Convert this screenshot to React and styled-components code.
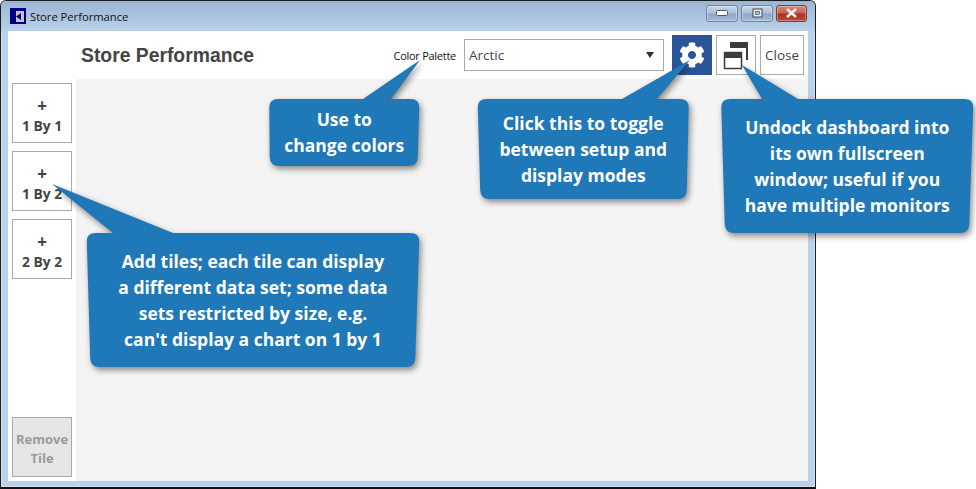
import { createGlobalStyle, styled } from "styled-components";
import { FaCog } from "react-icons/fa";

const Global = createGlobalStyle`
  html, body { margin:0; padding:0; background:#fff; }
  body { font-family:"Open Sans","Liberation Sans",sans-serif; overflow:hidden; }
`;

const Page = styled.div`position:relative; width:976px; height:489px; overflow:hidden;`;

const Win = styled.div`
  box-sizing:border-box; width:816px; height:489px; display:flex; flex-direction:column;
  border:1px solid #1c1c1c; border-bottom:2px solid #111; border-radius:6px 6px 0 0;
  background:#b9d1ea; box-shadow:inset 0 0 0 1px #d5e3f1;
`;
const TitleBar = styled.div`
  height:30px; flex:none; display:flex; align-items:center; padding:0 8px 0 9px;
  background:linear-gradient(#9cb5d1,#b9d1ea); border-radius:5px 5px 0 0;
`;
const AppIcon = styled.svg`width:16px; height:16px; flex:none; margin-right:4px;`;
const WinTitle = styled.span`font-size:11.2px; color:#111; flex:1;`;
const WinBtns = styled.div`display:flex; gap:3px; margin-top:-6px;`;
const WinBtn = styled.div`
  width:${p => p.$close ? 31 : 32}px; height:17px; box-sizing:border-box; display:flex; align-items:center; justify-content:center;
  border:1px solid ${p => p.$close ? "#7c3a32" : "#6f839c"}; border-radius:3px;
  background:${p => p.$close ? "linear-gradient(#d8897c 0%,#c4604f 48%,#a8301f 52%,#b9493a 100%)" : "linear-gradient(#c6d6e8 0%,#a9bed8 48%,#8ba6c6 52%,#a5bcd6 100%)"};
  box-shadow:inset 0 0 0 1px rgba(255,255,255,.35);
`;
const Inner = styled.div`
  flex:1; display:flex; flex-direction:column; margin:0 7px 6px 7px; background:#fff; min-height:0;
`;
const TopBar = styled.div`height:48px; flex:none; display:flex; align-items:center; padding:0 4px 0 73px;`;
const Heading = styled.h1`margin:1px 0 0; flex:1; font:bold 19.33px "Liberation Sans",sans-serif; color:#444;`;
const PaletteLabel = styled.span`font-size:11px; letter-spacing:-.27px; color:#111; margin-right:8px;`;
const Select = styled.div`
  box-sizing:border-box; width:200px; height:32px; display:flex; align-items:center; justify-content:space-between;
  padding:0 9px 0 4px; border:1px solid #aaa; font-size:13.5px; color:#444; margin-right:8px;
`;
const Arrow = styled.i`width:0; height:0; border:4px solid transparent; border-top:6px solid #333; border-bottom:0;`;
const ToolBtn = styled.div`
  box-sizing:border-box; width:${p => p.$w || 40}px; height:40px; display:flex; align-items:center; justify-content:center;
  border:1px solid ${p => p.$active ? "#2a5599" : "#aaa"}; background:${p => p.$active ? "#2a5599" : "#fff"};
  color:#444; font-size:13.5px; margin-left:${p => p.$ml || 0}px;
`;
const Body = styled.div`flex:1; display:flex; min-height:0;`;
const Side = styled.div`width:68px; flex:none; display:flex; flex-direction:column; gap:8px; padding:4px; box-sizing:border-box;`;
const TileBtn = styled.div`
  box-sizing:border-box; width:60px; height:60px; flex:none; display:flex; flex-direction:column; align-items:center; justify-content:center;
  padding-top:${p => p.$off ? 3 : 5}px;
  border:1px solid #aaa; background:${p => p.$off ? "#e6e6e6" : "#fff"}; color:${p => p.$off ? "#999" : "#444"};
  font-size:${p => p.$off ? 13 : 13.8}px; font-weight:700; line-height:${p => p.$off ? 19 : 20}px; text-align:center;
  margin-top:${p => p.$push ? "auto" : 0};
`;
const Plus = styled.span`font-size:17px;`;
const Main = styled.div`flex:1; background:#f4f4f4;`;

const Shapes = styled.svg`position:absolute; left:0; top:0; filter:drop-shadow(2px 3px 3px rgba(0,0,0,.45));`;
const Label = styled.div`
  position:absolute; left:${p => p.$x}px; top:${p => p.$y}px; width:${p => p.$w}px; height:${p => p.$h}px;
  box-sizing:border-box; padding-bottom:1px;
  display:flex; align-items:center; justify-content:center; text-align:center;
  color:#fff; font-size:17.5px; font-weight:700; line-height:26px;
`;

// rounded trapezoid with a pointer coming out of the top edge
function bubblePath({ top, bottom, tl, tr, bl, br, base, tip }) {
  const r = 9;
  return [
    `M${tl + r} ${top}`,
    `L${base[0]} ${top}`, `L${tip[0]} ${tip[1]}`, `L${base[1]} ${top}`,
    `L${tr - r} ${top}`, `Q${tr} ${top} ${tr - .3} ${top + r}`,
    `L${br + .3} ${bottom - r}`, `Q${br} ${bottom} ${br - r} ${bottom}`,
    `L${bl + r} ${bottom}`, `Q${bl} ${bottom} ${bl - .3} ${bottom - r}`,
    `L${tl + .3} ${top + r}`, `Q${tl} ${top} ${tl + r} ${top}Z`,
  ].join(" ");
}

const callouts = [
  { top: 99, bottom: 166, tl: 269, tr: 419.5, bl: 270, br: 417.5, base: [363, 391], tip: [420, 60],
    lines: ["Use to", "change colors"] },
  { top: 99, bottom: 199, tl: 477.5, tr: 689, bl: 480.5, br: 686.5, base: [622, 657], tip: [690, 60],
    lines: ["Click this to toggle", "between setup and", "display modes"] },
  { top: 99, bottom: 233, tl: 721, tr: 973.5, bl: 725, br: 969, base: [762, 798], tip: [742, 65],
    lines: ["Undock dashboard into", "its own fullscreen", "window; useful if you", "have multiple monitors"] },
  { top: 233, bottom: 367, tl: 86.5, tr: 419.5, bl: 90.5, br: 415, base: [113, 173], tip: [52, 184],
    lines: ["Add tiles; each tile can display", "a different data set; some data", "sets restricted by size, e.g.", "can't display a chart on 1 by 1"] },
];

const tiles = ["1 By 1", "1 By 2", "2 By 2"];

export default function App() {
  return (
    <Page>
      <Global />
      <Win>
        <TitleBar>
          <AppIcon viewBox="0 0 16 16">
            <rect width="16" height="16" fill="#00007f" />
            <path d="M6 3h8v11H6z" fill="#c4c4c4" />
            <path d="M6 8.500L11 5v7z" fill="#00007f" />
          </AppIcon>
          <WinTitle>Store Performance</WinTitle>
          <WinBtns>
            <WinBtn><svg width="12" height="6"><rect x=".5" y=".5" width="11" height="5" rx="1" fill="#fff" stroke="#556" /></svg></WinBtn>
            <WinBtn><svg width="11" height="10"><rect x="1" y="1" width="9" height="8" fill="#e8eef5" stroke="#445" /><rect x="3.500" y="3.500" width="4" height="3" fill="#a9bed8" stroke="#445" strokeWidth=".6" /></svg></WinBtn>
            <WinBtn $close><svg width="13" height="10"><path d="M2 1l9 8M11 1L2 9" stroke="#eee" strokeWidth="2.600" /></svg></WinBtn>
          </WinBtns>
        </TitleBar>
        <Inner>
          <TopBar>
            <Heading>Store Performance</Heading>
            <PaletteLabel>Color Palette</PaletteLabel>
            <Select>Arctic<Arrow /></Select>
            <ToolBtn $active><FaCog size={26} color="#fff" /></ToolBtn>
            <ToolBtn $ml={4}>
              <svg width="26" height="30" viewBox="0 0 26 30">
                <path d="M7 2h18v6H7z M23 8h2v12h-2z" fill="#3c3c3c" />
                <rect x="1.500" y="12.500" width="17" height="16" fill="#fff" stroke="#3c3c3c" strokeWidth="1.500" />
                <rect x="1" y="12" width="18" height="6" fill="#3c3c3c" />
              </svg>
            </ToolBtn>
            <ToolBtn $w={44} $ml={4}>Close</ToolBtn>
          </TopBar>
          <Body>
            <Side>
              {tiles.map(t => <TileBtn key={t}><Plus>+</Plus><span>{t}</span></TileBtn>)}
              <TileBtn $off $push><span>Remove</span><span>Tile</span></TileBtn>
            </Side>
            <Main />
          </Body>
        </Inner>
      </Win>

      <Shapes width="976" height="489">
        {callouts.map(c => <path key={c.tl} d={bubblePath(c)} fill="#1f78b8" />)}
      </Shapes>
      {callouts.map(c => (
        <Label key={c.tl} $x={c.tl} $y={c.top} $w={c.tr - c.tl} $h={c.bottom - c.top}>
          <div>{c.lines.map(l => <div key={l}>{l}</div>)}</div>
        </Label>
      ))}
    </Page>
  );
}
